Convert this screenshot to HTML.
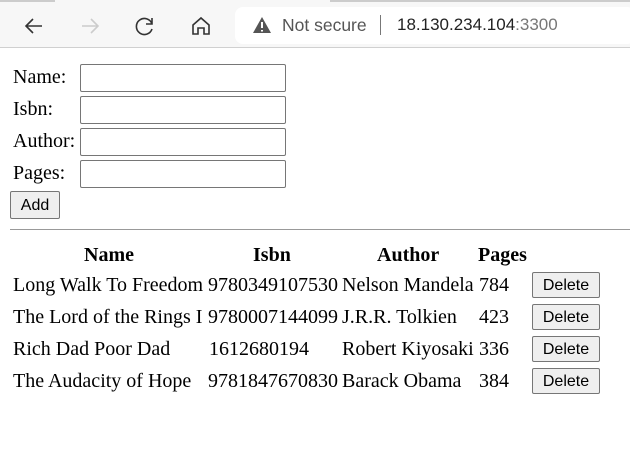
<!DOCTYPE html>
<html><head><style>
body{margin:0;width:630px;height:455px;overflow:hidden;background:#fff;font-family:"Liberation Serif",serif;font-size:20px;color:#000;position:relative}
.a{position:absolute;white-space:nowrap}
.bar{position:absolute;left:0;top:0;width:630px;height:47px;background:#f7f7f7;border-bottom:1px solid #d0d0d0}
.pill{position:absolute;left:235px;top:7px;width:400px;height:37px;background:#fff;border-radius:8px}
.inp{position:absolute;left:80px;width:204px;height:26px;border:1px solid #767676;border-radius:2px;background:#fff}
.btn{position:absolute;background:#efefef;border:1px solid #767676;border-radius:2px;font-family:"Liberation Sans",sans-serif;font-size:16px;text-align:center;box-sizing:border-box}
</style></head><body>
<div class="bar"></div>
<div class="a" style="left:0;top:0;width:55px;height:2px;background:#ccc"></div>
<div class="a" style="left:330px;top:0;width:300px;height:2px;background:#ccc"></div>
<div class="pill"></div>
<svg class="a" style="left:22px;top:14px" width="24" height="24" viewBox="0 0 24 24" fill="none" stroke="#333" stroke-width="1.6"><path d="M20 12H4M11 5l-7 7 7 7"/></svg>
<svg class="a" style="left:78px;top:14px" width="24" height="24" viewBox="0 0 24 24" fill="none" stroke="#ccc" stroke-width="1.6"><path d="M4 12h16M13 5l7 7-7 7"/></svg>
<svg class="a" style="left:133px;top:14px" width="24" height="24" viewBox="0 0 24 24" fill="none" stroke="#333" stroke-width="1.6"><path d="M19 10A8 8 0 1 0 19 15M19 4v6h-6"/></svg>
<svg class="a" style="left:189px;top:14px" width="24" height="24" viewBox="0 0 24 24" fill="none" stroke="#333" stroke-width="1.6"><path d="M4 11L12 4l8 7v9h-5v-6h-6v6H4z"/></svg>
<svg class="a" style="left:252px;top:16px" width="20" height="18" viewBox="0 0 20 18"><path d="M10 1L19 17H1z" fill="#555"/><path d="M10 6v6M10 14v1.5" stroke="#fff" stroke-width="2"/></svg>
<div class="a" style="left:282px;top:15px;font-family:'Liberation Sans',sans-serif;font-size:17.5px;color:#555">Not secure</div>
<div class="a" style="left:380px;top:15px;width:1px;height:20px;background:#777"></div>
<div class="a" style="left:397px;top:15px;font-family:'Liberation Sans',sans-serif;font-size:17px;color:#222">18.130.234.104<span style="color:#777">:3300</span></div>

<div class="a" style="left:13px;top:66px">Name:</div>
<div class="a" style="left:13px;top:98px">Isbn:</div>
<div class="a" style="left:13px;top:130px">Author:</div>
<div class="a" style="left:13px;top:162px">Pages:</div>
<div class="inp" style="top:64px"></div>
<div class="inp" style="top:96px"></div>
<div class="inp" style="top:128px"></div>
<div class="inp" style="top:160px"></div>
<div class="btn" style="left:10px;top:191px;width:50px;height:28px;line-height:27px">Add</div>
<div class="a" style="left:10px;top:229px;width:620px;height:1px;background:#999"></div>

<div class="a" style="left:84px;top:244px;font-weight:bold">Name</div>
<div class="a" style="left:253px;top:244px;font-weight:bold">Isbn</div>
<div class="a" style="left:377px;top:244px;font-weight:bold">Author</div>
<div class="a" style="left:478px;top:244px;font-weight:bold">Pages</div>

<div class="a" style="left:13px;top:274px">Long Walk To Freedom</div>
<div class="a" style="left:208px;top:274px">9780349107530</div>
<div class="a" style="left:342px;top:274px">Nelson Mandela</div>
<div class="a" style="left:479px;top:274px">784</div>
<div class="btn" style="left:532px;top:272px;width:68px;height:26px;line-height:26px">Delete</div>

<div class="a" style="left:13px;top:306px">The Lord of the Rings I</div>
<div class="a" style="left:208px;top:306px">9780007144099</div>
<div class="a" style="left:342px;top:306px">J.R.R. Tolkien</div>
<div class="a" style="left:479px;top:306px">423</div>
<div class="btn" style="left:532px;top:304px;width:68px;height:26px;line-height:26px">Delete</div>

<div class="a" style="left:13px;top:338px">Rich Dad Poor Dad</div>
<div class="a" style="left:209px;top:338px">1612680194</div>
<div class="a" style="left:342px;top:338px">Robert Kiyosaki</div>
<div class="a" style="left:479px;top:338px">336</div>
<div class="btn" style="left:532px;top:336px;width:68px;height:26px;line-height:26px">Delete</div>

<div class="a" style="left:13px;top:370px">The Audacity of Hope</div>
<div class="a" style="left:208px;top:370px">9781847670830</div>
<div class="a" style="left:342px;top:370px">Barack Obama</div>
<div class="a" style="left:479px;top:370px">384</div>
<div class="btn" style="left:532px;top:368px;width:68px;height:26px;line-height:26px">Delete</div>
</body></html>
